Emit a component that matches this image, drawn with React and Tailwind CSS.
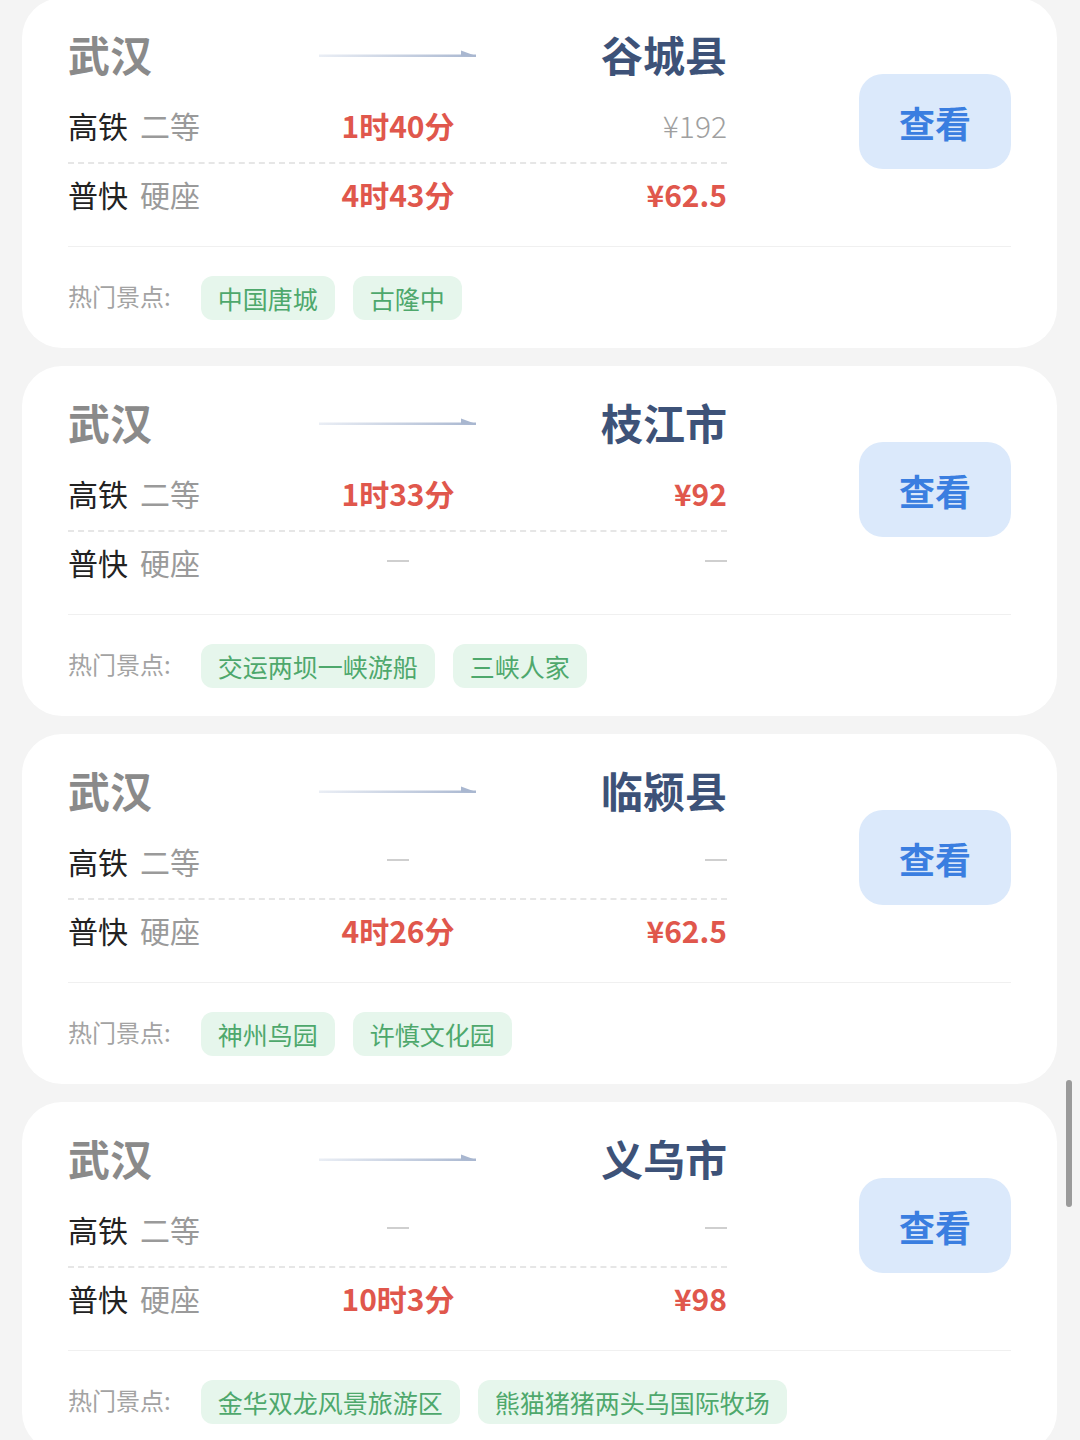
const routes = [
  {
    to: "谷城县",
    gaotie: { time: "1时40分", price: "¥192", cheap: false },
    pukuai: { time: "4时43分", price: "¥62.5", cheap: true },
    spots: ["中国唐城", "古隆中"],
  },
  {
    to: "枝江市",
    gaotie: { time: "1时33分", price: "¥92", cheap: true },
    pukuai: null,
    spots: ["交运两坝一峡游船", "三峡人家"],
  },
  {
    to: "临颍县",
    gaotie: null,
    pukuai: { time: "4时26分", price: "¥62.5", cheap: true },
    spots: ["神州鸟园", "许慎文化园"],
  },
  {
    to: "义乌市",
    gaotie: null,
    pukuai: { time: "10时3分", price: "¥98", cheap: true },
    spots: ["金华双龙风景旅游区", "熊猫猪猪两头乌国际牧场"],
  },
];

function Dash() {
  return <span className="block w-[22px] h-[2px] bg-[#cfcfcf] -mt-[3px]" />;
}

function Arrow() {
  return (
    <svg width="158" height="12" viewBox="0 0 158 12">
      <defs>
        <linearGradient id="arr" x1="0" x2="1" y1="0" y2="0">
          <stop offset="0" stopColor="#eaeef5" />
          <stop offset="1" stopColor="#a9b7d0" />
        </linearGradient>
      </defs>
      <rect x="0" y="6.5" width="157" height="2.5" fill="url(#arr)" />
      <polygon points="142,2.5 157,8 142,8" fill="#a9b7d0" />
    </svg>
  );
}

function TrainRow({ type, seat, info, className }) {
  return (
    <div className={"grid grid-cols-[250px_160px_1fr] items-center " + className}>
      <div className="flex items-center gap-[12px] text-[30px] leading-none">
        <span className="text-[#222]">{type}</span>
        <span className="text-[#9a9a9a]">{seat}</span>
      </div>
      <div className="flex justify-center items-center text-[30px] leading-none">
        {info ? <span className="font-bold text-[#e0574c]">{info.time}</span> : <Dash />}
      </div>
      <div className="flex justify-end items-center text-[30px] leading-none">
        {info ? (
          info.cheap ? (
            <span className="font-bold text-[#e0574c]">{info.price}</span>
          ) : (
            <span className="font-light text-[#a0a0a0]">{info.price}</span>
          )
        ) : (
          <Dash />
        )}
      </div>
    </div>
  );
}

function RouteCard({ r }) {
  return (
    <div className="h-[350px] shrink-0 rounded-[40px] bg-white px-[46px] pt-[28px] flex flex-col">
      <div className="flex">
        <div className="w-[659px]">
          <div className="grid grid-cols-[250px_160px_1fr] items-center h-[56px]">
            <span className="text-[42px] font-bold text-[#8a8a8a] leading-none">武汉</span>
            <div className="flex justify-center">
              <Arrow />
            </div>
            <span className="text-right text-[42px] font-bold text-[#3d5278] leading-none">{r.to}</span>
          </div>
          <TrainRow
            type="高铁"
            seat="二等"
            info={r.gaotie}
            className="h-[82px] pt-[6px] border-b-2 border-dashed border-[#e6e6e6]"
          />
          <TrainRow type="普快" seat="硬座" info={r.pukuai} className="h-[60px]" />
        </div>
        <button className="ml-auto mt-[48px] w-[152px] h-[95px] rounded-[24px] bg-[#dbe9fb] text-[#3a7ee0] text-[36px] font-bold leading-none">
          查看
        </button>
      </div>
      <div className="mt-[22px] border-t border-[#f0f0f0]" />
      <div className="flex items-center pt-[29px]">
        <span className="text-[24px] text-[#a3a3a3] leading-none mr-[30px] -mt-[4px]">热门景点:</span>
        <div className="flex gap-[18px]">
          {r.spots.map((s) => (
            <span
              key={s}
              className="h-[44px] px-[17px] flex items-center rounded-[12px] bg-[#e6f6ec] text-[#4ea86c] text-[25px] leading-none"
            >
              {s}
            </span>
          ))}
        </div>
      </div>
    </div>
  );
}

export default function App() {
  return (
    <div
      className="relative w-[1080px] h-[1440px] overflow-hidden bg-[#f4f4f4]"
      style={{ fontFamily: '"Noto Sans CJK SC", "Noto Sans", sans-serif' }}
    >
      <div className="flex flex-col gap-[18px] pl-[22px] pr-[23px] mt-[-2px]">
        {routes.map((r) => (
          <RouteCard key={r.to} r={r} />
        ))}
      </div>
      <div className="absolute right-[8px] top-[1080px] w-[6px] h-[127px] rounded-full bg-[#9a9a9a]" />
    </div>
  );
}
